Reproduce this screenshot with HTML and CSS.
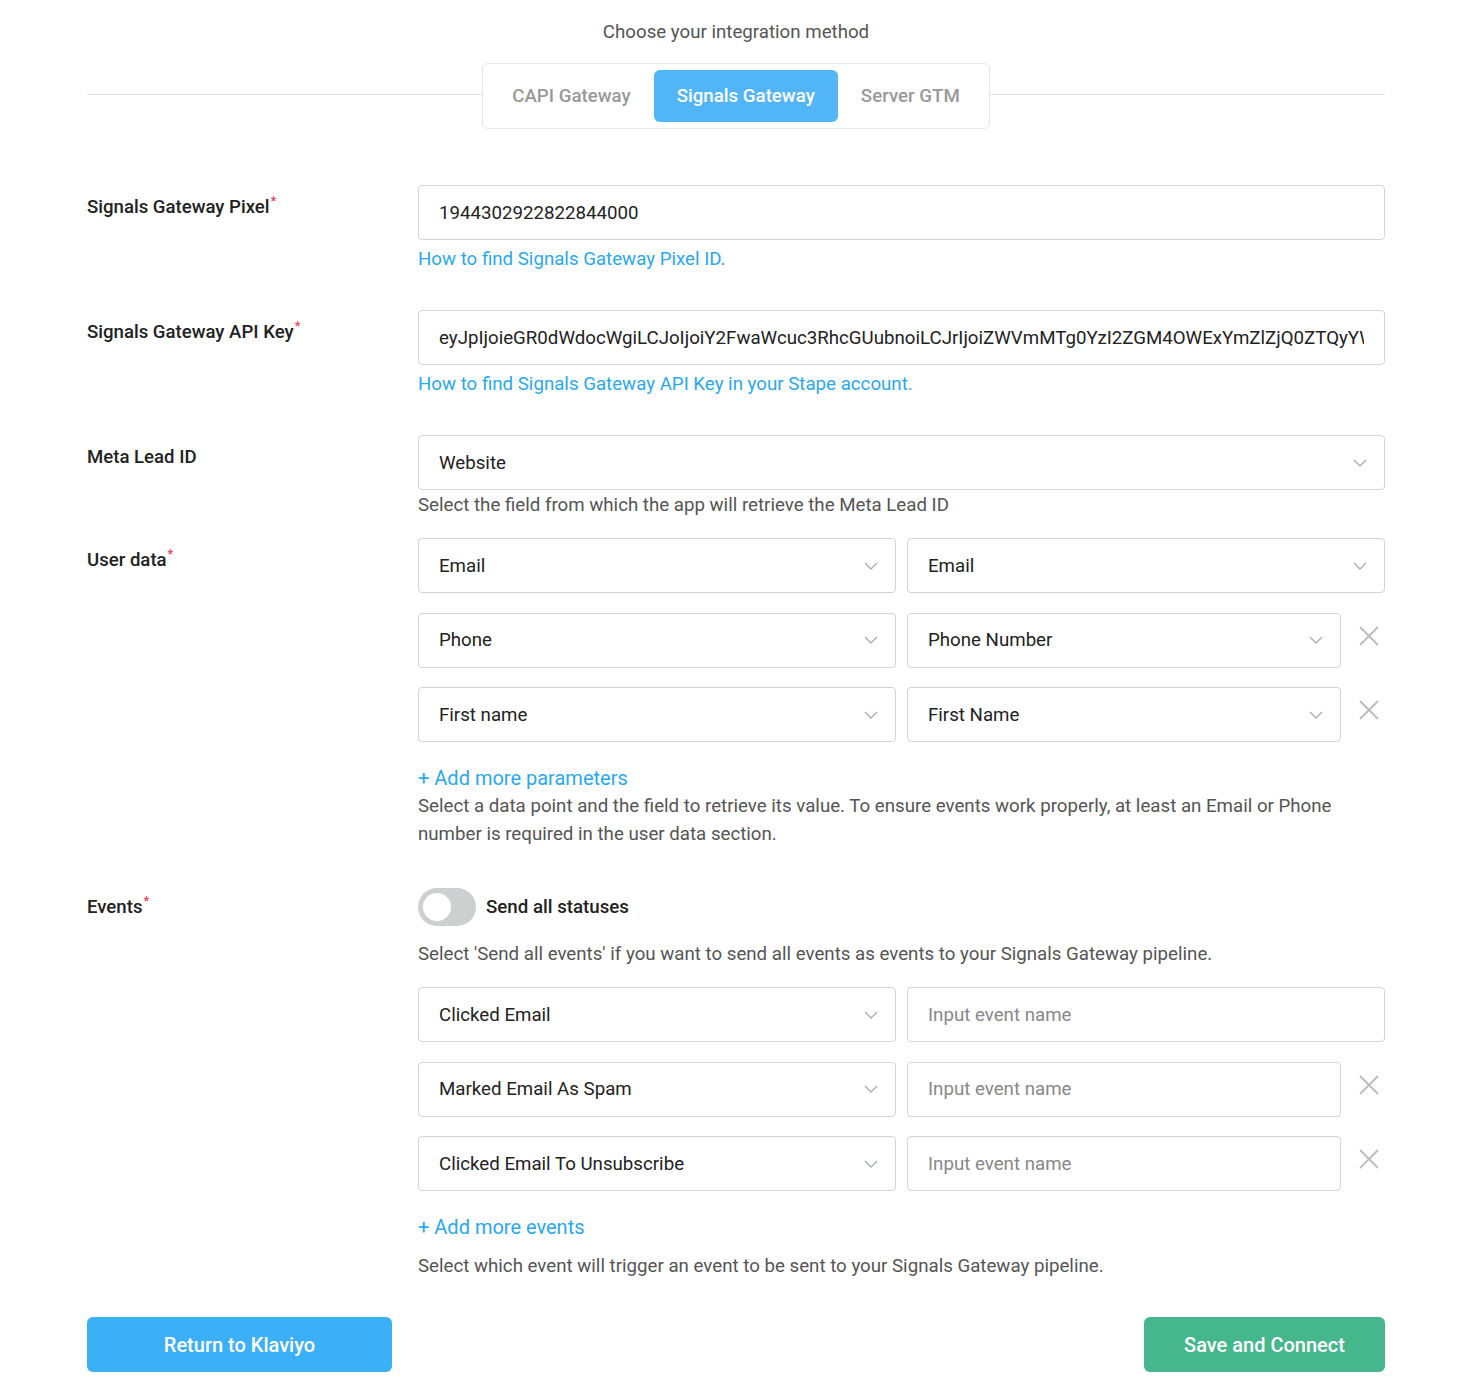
FILE: index.html
```html
<!DOCTYPE html>
<html>
<head>
<meta charset="utf-8">
<link rel="stylesheet" href="styles.css">
</head>
<body>
<div class="page">
  <div class="title">Choose your integration method</div>
  <div class="tabs-wrap">
    <div class="tabs">
      <div class="tab">CAPI Gateway</div>
      <div class="tab active">Signals Gateway</div>
      <div class="tab">Server GTM</div>
    </div>
  </div>

  <div class="row r-link">
    <div class="label">Signals Gateway Pixel<sup>*</sup></div>
    <div class="field">
      <div class="input"><div class="val">1944302922822844000</div></div>
      <a class="link">How to find Signals Gateway Pixel ID.</a>
    </div>
  </div>

  <div class="row r-link">
    <div class="label">Signals Gateway API Key<sup>*</sup></div>
    <div class="field">
      <div class="input"><div class="val">eyJpIjoieGR0dWdocWgiLCJoIjoiY2FwaWcuc3RhcGUubnoiLCJrIjoiZWVmMTg0YzI2ZGM4OWExYmZlZjQ0ZTQyYWNmNjQ4In0=</div></div>
      <a class="link">How to find Signals Gateway API Key in your Stape account.</a>
    </div>
  </div>

  <div class="row r-meta">
    <div class="label">Meta Lead ID</div>
    <div class="field">
      <div class="input select"><div class="val">Website</div><svg class="chev" viewBox="0 0 14 8"><path d="M1 1l6 6 6-6"/></svg></div>
      <div class="help help-meta">Select the field from which the app will retrieve the Meta Lead ID</div>
    </div>
  </div>

  <div class="row r-user">
    <div class="label">User data<sup>*</sup></div>
    <div class="field">
      <div class="pair">
        <div class="input select"><div class="val">Email</div><svg class="chev" viewBox="0 0 14 8"><path d="M1 1l6 6 6-6"/></svg></div>
        <div class="input select"><div class="val">Email</div><svg class="chev" viewBox="0 0 14 8"><path d="M1 1l6 6 6-6"/></svg></div>
      </div>
      <div class="pair removable">
        <div class="input select"><div class="val">Phone</div><svg class="chev" viewBox="0 0 14 8"><path d="M1 1l6 6 6-6"/></svg></div>
        <div class="input select"><div class="val">Phone Number</div><svg class="chev" viewBox="0 0 14 8"><path d="M1 1l6 6 6-6"/></svg></div>
        <svg class="x" viewBox="0 0 20 20"><path d="M1 1l18 18M19 1L1 19"/></svg>
      </div>
      <div class="pair removable">
        <div class="input select"><div class="val">First name</div><svg class="chev" viewBox="0 0 14 8"><path d="M1 1l6 6 6-6"/></svg></div>
        <div class="input select"><div class="val">First Name</div><svg class="chev" viewBox="0 0 14 8"><path d="M1 1l6 6 6-6"/></svg></div>
        <svg class="x" viewBox="0 0 20 20"><path d="M1 1l18 18M19 1L1 19"/></svg>
      </div>
      <a class="add">+ Add more parameters</a>
      <div class="help">Select a data point and the field to retrieve its value. To ensure events work properly, at least an Email or Phone number is required in the user data section.</div>
    </div>
  </div>

  <div class="row r-events">
    <div class="label">Events<sup>*</sup></div>
    <div class="field">
      <div class="toggle-row">
        <div class="toggle"><div class="knob"></div></div>
        <div class="toggle-label">Send all statuses</div>
      </div>
      <div class="help help-toggle">Select 'Send all events' if you want to send all events as events to your Signals Gateway pipeline.</div>
      <div class="pair first">
        <div class="input select"><div class="val">Clicked Email</div><svg class="chev" viewBox="0 0 14 8"><path d="M1 1l6 6 6-6"/></svg></div>
        <div class="input"><div class="val ph">Input event name</div></div>
      </div>
      <div class="pair removable">
        <div class="input select"><div class="val">Marked Email As Spam</div><svg class="chev" viewBox="0 0 14 8"><path d="M1 1l6 6 6-6"/></svg></div>
        <div class="input"><div class="val ph">Input event name</div></div>
        <svg class="x" viewBox="0 0 20 20"><path d="M1 1l18 18M19 1L1 19"/></svg>
      </div>
      <div class="pair removable">
        <div class="input select"><div class="val">Clicked Email To Unsubscribe</div><svg class="chev" viewBox="0 0 14 8"><path d="M1 1l6 6 6-6"/></svg></div>
        <div class="input"><div class="val ph">Input event name</div></div>
        <svg class="x" viewBox="0 0 20 20"><path d="M1 1l18 18M19 1L1 19"/></svg>
      </div>
      <a class="add">+ Add more events</a>
      <div class="help help-events">Select which event will trigger an event to be sent to your Signals Gateway pipeline.</div>
    </div>
  </div>

  <div class="actions">
    <button class="btn btn-blue">Return to Klaviyo</button>
    <button class="btn btn-green">Save and Connect</button>
  </div>
</div>
</body>
</html>
```

FILE: styles.css
```css
* { box-sizing: border-box; }
body {
  margin: 0;
  font-family: Roboto, "Liberation Sans", Arial, sans-serif;
  color: #222;
  background: #fff;
}
.page {
  width: 1298px;
  margin-left: 87px;
  padding-top: 17px;
}
.title {
  text-align: center;
  font-size: 18.7px;
  line-height: 28px;
  color: #555;
  padding-top: 1px;
}
.tabs-wrap {
  margin-top: 17px;
  display: flex;
  justify-content: center;
  background: linear-gradient(#e3e3e3, #e3e3e3) no-repeat 0 31px / 100% 1px;
}
.tabs {
  display: flex;
  padding: 6px;
  border: 1px solid #e6e6e6;
  border-radius: 6px;
  background: #fff;
}
.tab {
  height: 52px;
  padding: 0 23px;
  display: flex;
  align-items: center;
  font-size: 18.7px;
  font-weight: 500;
  color: #999;
  border-radius: 6px;
}
.tab.active {
  background: #52b5f8;
  color: #fff;
}
.row {
  display: grid;
  grid-template-columns: 331px 1fr;
}
.label {
  padding-top: 8px;
  font-size: 18.6px;
  line-height: 28px;
  font-weight: 500;
  color: #222;
}
.label sup {
  color: #e5425b;
  font-size: 13px;
  line-height: 0;
  vertical-align: 0;
  position: relative;
  top: -8px;
  margin-left: 1px;
}
.r-link { margin-top: 56px; }
.r-link + .r-link { margin-top: 37px; }
.r-meta { margin-top: 37px; }
.r-user { margin-top: 19px; }
.r-events { margin-top: 37px; }
.field {
  font-size: 18.7px;
  line-height: 28px;
  min-width: 0;
}
.input {
  height: 55px;
  border: 1px solid #d2d4d7;
  border-radius: 4px;
  padding: 0 20px;
  display: flex;
  align-items: center;
  min-width: 0;
  background: #fff;
}
.val {
  flex: 1;
  min-width: 0;
  overflow: hidden;
  white-space: nowrap;
  color: #222;
  font-size: 18.7px;
}
.val.ph { color: #888; }
.select { padding-right: 17px; }
.chev {
  width: 14px;
  height: 8px;
  flex: none;
  fill: none;
  stroke: #a9acb0;
  stroke-width: 1.4;
  margin-left: 10px;
}
.link {
  display: block;
  margin-top: 5px;
  color: #2aa8ef;
  font-size: 18.7px;
  line-height: 28px;
}
.help {
  color: #555;
  font-size: 18.7px;
  line-height: 28px;
}
.help-meta { margin-top: 1px; }
.pair {
  display: grid;
  grid-template-columns: 478px 1fr;
  column-gap: 11px;
  margin-top: 19.5px;
}
.pair:first-child { margin-top: 0; }
.pair.first { margin-top: 19px; }
.pair.removable {
  grid-template-columns: 478px 1fr 33px;
}
.x {
  width: 20px;
  height: 20px;
  fill: none;
  stroke: #bcbcbc;
  stroke-width: 1.8;
  justify-self: end;
  align-self: center;
  margin-right: 6px;
  margin-top: -9px;
}
.add {
  display: block;
  margin-top: 22px;
  color: #2aa8ef;
  font-size: 20px;
  line-height: 28px;
}
.toggle-row {
  height: 44px;
  display: flex;
  align-items: center;
}
.toggle {
  width: 58px;
  height: 38px;
  border-radius: 19px;
  background: #cdcfd1;
  position: relative;
  margin-right: 10px;
}
.knob {
  position: absolute;
  left: 5px;
  top: 5px;
  width: 28px;
  height: 28px;
  border-radius: 50%;
  background: #fff;
}
.toggle-label {
  font-size: 18.7px;
  font-weight: 500;
  color: #222;
}
.help-toggle { margin-top: 11px; }
.help-events { margin-top: 11px; }
.actions {
  margin-top: 37px;
  display: flex;
  justify-content: space-between;
}
.btn {
  height: 55px;
  border: none;
  border-radius: 6px;
  color: #fff;
  font-family: Roboto, "Liberation Sans", Arial, sans-serif;
  font-size: 20px;
  font-weight: 500;
}
.btn-blue {
  width: 305px;
  background: #3bb0f6;
}
.btn-green {
  width: 241px;
  background: #46b68c;
}
```
